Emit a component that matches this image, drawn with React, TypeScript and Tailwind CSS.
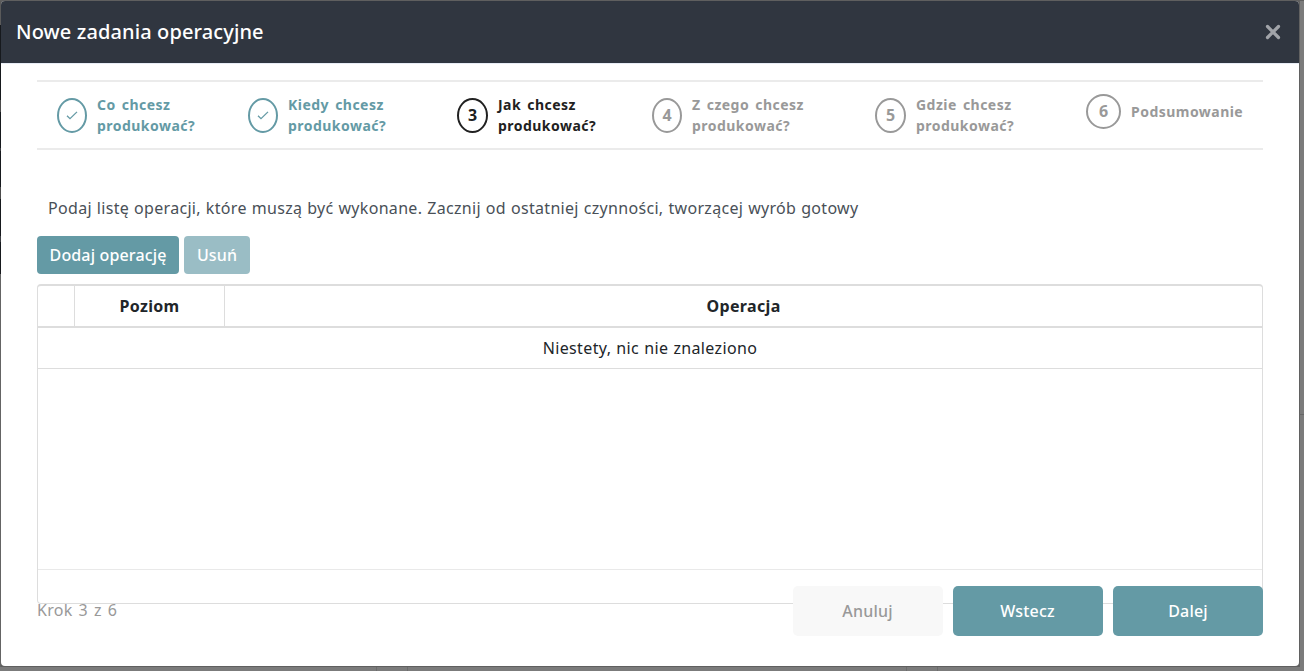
import React from "react";

type State = "done" | "active" | "todo";

const stateColor: Record<State, string> = {
  done: "text-[#649aa5] border-[#649aa5]",
  active: "text-[#212121] border-[#212121]",
  todo: "text-[#999999] border-[#999999]",
};

const steps: { n: number; lines: string[]; state: State; box: string; ring: string }[] = [
  { n: 1, lines: ["Co chcesz", "produkować?"], state: "done", box: "w-[191px]", ring: "w-[30px]" },
  { n: 2, lines: ["Kiedy chcesz", "produkować?"], state: "done", box: "w-[209px]", ring: "w-[30px]" },
  { n: 3, lines: ["Jak chcesz", "produkować?"], state: "active", box: "w-[195px]", ring: "w-[31px]" },
  { n: 4, lines: ["Z czego chcesz", "produkować?"], state: "todo", box: "w-[223px]", ring: "w-[30px]" },
  { n: 5, lines: ["Gdzie chcesz", "produkować?"], state: "todo", box: "w-[211px]", ring: "w-[31px]" },
  { n: 6, lines: ["Podsumowanie"], state: "todo", box: "w-[177px]", ring: "w-[35px]" },
];

function Check() {
  return (
    <svg width="12" height="10" viewBox="0 0 12 10" fill="none" stroke="currentColor" strokeWidth="1.3">
      <path d="M1 4.7 4 7.7 11 0.9" />
    </svg>
  );
}

function Steps() {
  return (
    <div className="flex h-[70px] items-start border-y-2 border-[#ebebeb] pl-5">
      {steps.map((s) => (
        <div
          key={s.n}
          className={`flex shrink-0 gap-[10px] text-[14px] font-bold leading-[21px] ${s.box} ${stateColor[s.state]} ${s.n === 6 ? "pt-3" : "pt-4"}`}
        >
          <div className={`flex h-[35px] shrink-0 items-center justify-center rounded-[50%] border-2 border-inherit text-[16px] ${s.ring}`}>
            {s.state === "done" ? <Check /> : s.n}
          </div>
          <div className={`whitespace-nowrap tracking-[0.47px] [word-spacing:2px] ${s.n === 6 ? "pt-[7px]" : "-mt-1"}`}>
            {s.lines.map((l) => (
              <div key={l}>{l}</div>
            ))}
          </div>
        </div>
      ))}
    </div>
  );
}

function OperationsTable() {
  return (
    <div className="flex h-[320px] flex-col rounded-[4px] border border-t-2 border-[#dddddd] text-[16px] text-[#212529]">
      <div className="flex h-[42px] border-b-2 border-[#dddddd] text-center font-bold leading-[40px] tracking-[0.35px]">
        <div className="w-[37px] border-r border-[#dddddd]" />
        <div className="w-[150px] border-r border-[#dddddd]">Poziom</div>
        <div className="flex-1">Operacja</div>
      </div>
      <div className="h-[41px] border-b border-[#dddddd] text-center leading-[40px] tracking-[0.37px] [word-spacing:0.5px]">
        Niestety, nic nie znaleziono
      </div>
      <div className="h-[201px] border-b border-[#e9e9e9]" />
    </div>
  );
}

export default function App() {
  return (
    <div className="flex h-[671px] w-[1304px] flex-col overflow-hidden bg-[#5f5f5f] font-['Noto_Sans','Open_Sans',sans-serif]">
      <div className="flex h-[667px] pt-px">
        <div className="flex w-px flex-col">
          <div className="h-6 bg-[#5a5a5a]" />
          <div className="h-[75px] bg-[#16191d]" />
          <div className="h-3 bg-[#4b4b4b]" />
          <div className="h-[36px] bg-[#16191d]" />
          <div className="h-[3px] bg-[#3c3e42]" />
          <div className="h-[36px] bg-[#16191d]" />
          <div className="h-3 bg-[#4b4b4b]" />
          <div className="h-[37px] bg-[#16191d]" />
          <div className="h-[6px] bg-[#3c3e42]" />
          <div className="h-8 bg-[#16191d]" />
          <div className="flex-1 bg-[#646464]" />
        </div>
        <div className="flex h-[665px] w-[1298px] flex-col overflow-hidden rounded-[4px] bg-white">
          <header className="flex h-[62px] shrink-0 items-center justify-between bg-[#303640] pl-[15px] pr-[18px]">
            <h1 className="text-[20px] font-medium leading-[30px] tracking-[0.12px] text-white">Nowe zadania operacyjne</h1>
            <svg className="mb-px" width="16" height="16" viewBox="0 0 16 16" stroke="#a1a4a9" strokeWidth="3.2" strokeLinecap="round">
              <path d="M2.5 2.5 13.5 13.5M13.5 2.5 2.5 13.5" />
            </svg>
          </header>
          <main className="border-t border-[#e7ecf5] px-9 pt-4">
            <Steps />
            <p className="mt-[46px] pl-[11px] text-[16px] leading-6 tracking-[0.31px] text-[#495057] [word-spacing:0.5px]">
              Podaj listę operacji, które muszą być wykonane. Zacznij od ostatniej czynności, tworzącej wyrób gotowy
            </p>
            <div className="mb-[10px] mt-4 flex h-[38px] gap-[5px] text-[16px] font-medium tracking-[0.15px] text-white">
              <button className="w-[142px] rounded-[4px] bg-[#649aa5]">Dodaj operację</button>
              <button className="w-[66px] rounded-[4px] bg-[#9abdc5]">Usuń</button>
            </div>
            <OperationsTable />
            <footer className="relative -mt-[18px] flex gap-[10px] text-[16px] font-medium tracking-[0.2px] text-white">
              <div className="flex-1 pt-3 font-normal leading-6 tracking-[0.3px] text-[#999999] [word-spacing:1.5px]">Krok 3 z 6</div>
              <button className="h-[50px] w-[150px] rounded-[5px] bg-[#f8f8f8] pr-px text-[#999999]">Anuluj</button>
              <button className="h-[50px] w-[150px] rounded-[5px] bg-[#649aa5] pr-px">Wstecz</button>
              <button className="h-[50px] w-[150px] rounded-[5px] bg-[#649aa5]">Dalej</button>
            </footer>
          </main>
        </div>
        <div className="flex w-[5px] flex-col bg-[#7b7b7b]">
          <div className="h-[414px] border-b border-l border-b-[#676767] border-l-[#616161]" />
          <div className="flex-1 border-l border-[#616161]" />
        </div>
      </div>
      <div className="flex h-1 bg-[#7b7b7b]">
        <div className="w-[377px] border-r border-[#6c6c6c]" />
        <div className="w-[31px] border-r border-[#6c6c6c]" />
        <div className="w-[499px] border-r border-[#6c6c6c]" />
        <div className="w-[31px] border-r border-[#6c6c6c]" />
      </div>
    </div>
  );
}
